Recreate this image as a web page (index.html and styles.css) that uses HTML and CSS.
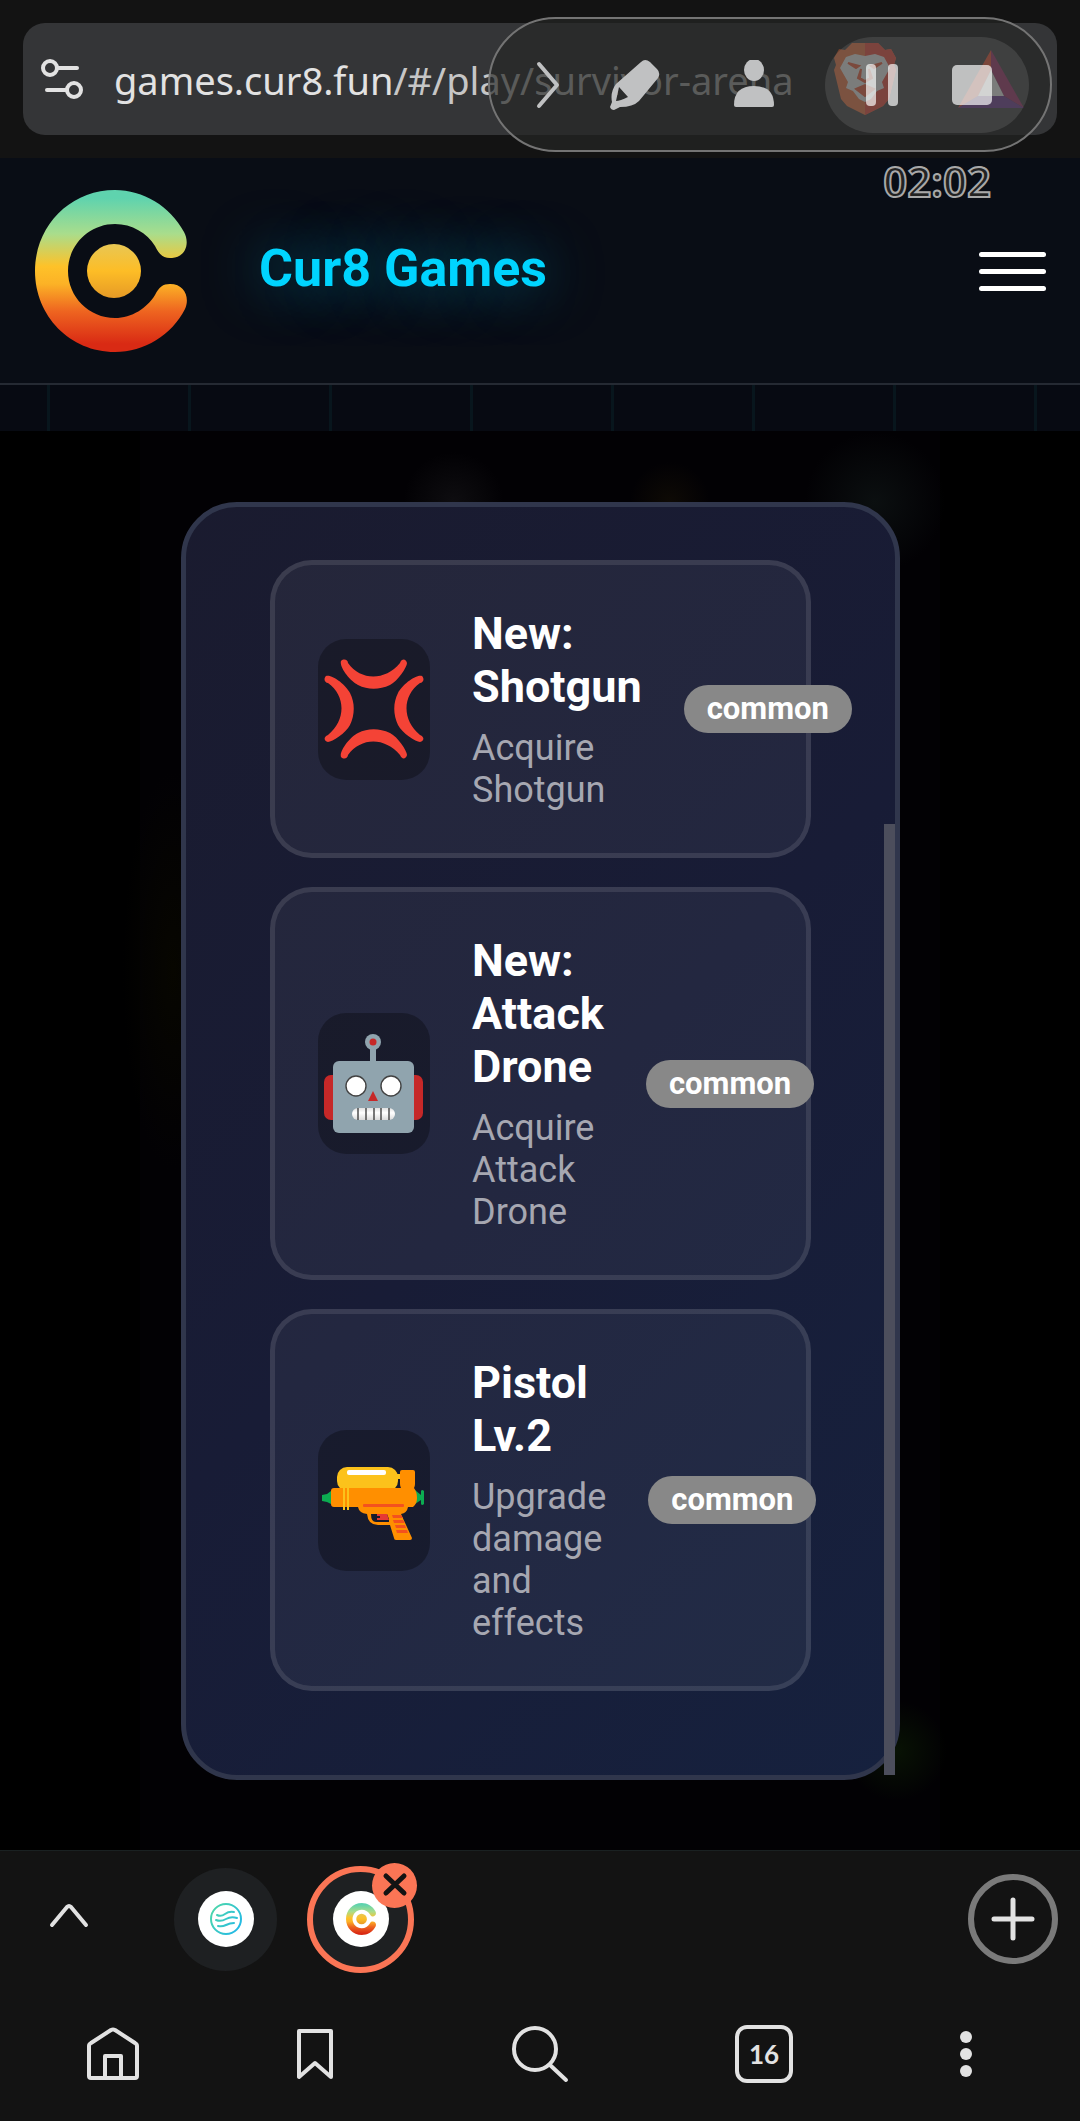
FILE: index.html
```
<!DOCTYPE html>
<html lang="en">
  <head>
    <meta charset="UTF-8" />
    <meta name="viewport" content="width=device-width, initial-scale=1.0" />
    <title>Cur8 Games</title>
    <link rel="stylesheet" href="styles.css">
  </head>
  <body>
    <!-- browser address bar -->
    <div class="browser-top">
      <div class="address-bar">
        <button class="icon-button" aria-label="Site settings">
          <svg width="44" height="44" viewBox="0 0 44 44" fill="none" stroke="#e2e2e2" stroke-width="4" stroke-linecap="round">
            <circle cx="10" cy="11" r="7" />
            <path d="M18 11h19" />
            <circle cx="34" cy="33" r="7" />
            <path d="M7 33h19" />
          </svg>
        </button>
        <div class="url">games.cur8.fun<span>/#/play/survivor-arena</span></div>
        <button class="icon-button brave" aria-label="Brave Shields">
          <svg width="62" height="72" viewBox="0 0 62 72">
            <path d="M18 0h26l7 7 6-1 5 9-2 7 2 5-7 29-6 7-18 9-18-9-6-7-7-29 2-5-2-7 5-9 6 1z" fill="#ff7139" />
            <path d="M31 0h13l7 7 6-1 5 9-2 7 2 5-7 29-6 7-18 9z" fill="#fb3d2b" />
            <path d="M12 14l9-3 10 2 10-2 9 3 6 11-8 14 2 6-7 3-6 8-6 3-6-3-6-8-7-3 2-6-8-14z" fill="#fff" />
            <path d="M14 20l11 3-3 2zM48 20l-11 3 3 2zM27 26l-3 9 7 4 7-4-3-9 1 9-5 3-5-3zM22 46l9-4 9 4-9 7z" fill="#fb542b" stroke="#fb542b" stroke-width="2" />
          </svg>
        </button>
        <button class="icon-button" aria-label="Brave Rewards">
          <svg width="66" height="58" viewBox="0 0 66 58">
            <path d="M33 0L33 20 20 46 0 58z" fill="#ff4724" />
            <path d="M33 0l33 58-20-12-13-26z" fill="#9e1f63" />
            <path d="M0 58l20-12h26l20 12z" fill="#662d91" />
            <path d="M33 20l13 26H20z" fill="#fff" />
          </svg>
        </button>
      </div>
      <!-- floating screen recorder -->
      <div class="recorder">
        <button class="icon-button collapse" aria-label="Collapse">
          <svg width="50" height="50" viewBox="0 0 50 50" fill="none" stroke="#c0c1c2" stroke-width="4" stroke-linecap="round" stroke-linejoin="round">
            <path d="M15 4l18 21-18 21" />
          </svg>
        </button>
        <button class="icon-button" aria-label="Draw">
          <svg width="52" height="52" viewBox="0 0 52 52" fill="#c0c1c2">
            <path fill-rule="evenodd" d="M33 3q4-4 9 0l7 7q4 4 1 9L31 42q-6 6-19 6l-6 3q-3 0-4-3l2-5q-2-10 4-18zM11 28L8 42q4 0 12-4z" />
          </svg>
        </button>
        <button class="icon-button camera" aria-label="Camera">
          <svg width="50" height="50" viewBox="0 0 50 50" fill="#c0c1c2">
            <ellipse cx="25" cy="10" rx="10" ry="11" />
            <path d="M5 45q0-19 20-19t20 19q0 2-2 2H7q-2 0-2-2z" />
          </svg>
        </button>
        <div class="recorder-controls">
          <button class="icon-button" aria-label="Pause">
            <svg width="50" height="50" viewBox="0 0 50 50" fill="#fff" fill-opacity="0.67">
              <rect x="9" y="4" width="10" height="42" rx="4" />
              <rect x="31" y="4" width="10" height="42" rx="4" />
            </svg>
          </button>
          <button class="icon-button" aria-label="Stop">
            <svg width="50" height="50" viewBox="0 0 50 50" fill="#fff" fill-opacity="0.67">
              <rect x="5" y="5" width="40" height="40" rx="5" />
            </svg>
          </button>
        </div>
      </div>
      <div class="recorder-time">02:02</div>
    </div>

    <!-- site header -->
    <header class="site-header">
      <a class="brand" href="#/">
        <svg class="logo" width="152" height="162" viewBox="0 0 152 162" aria-hidden="true">
          <defs>
            <linearGradient id="cur8" x1="0" y1="0" x2="0" y2="1">
              <stop offset="0.05" stop-color="#5fd3ae" />
              <stop offset="0.27" stop-color="#a9dd8c" />
              <stop offset="0.47" stop-color="#fec229" />
              <stop offset="0.58" stop-color="#fcb226" />
              <stop offset="0.75" stop-color="#ee6420" />
              <stop offset="0.95" stop-color="#d92a14" />
            </linearGradient>
            <linearGradient id="dot" x1="0" y1="0" x2="0" y2="1">
              <stop offset="0" stop-color="#e8c754" />
              <stop offset="0.5" stop-color="#fdbd26" />
              <stop offset="1" stop-color="#e69a26" />
            </linearGradient>
          </defs>
          <path fill="url(#cur8)" d="M80 0C108 0 135 16 149 42C155 53 151 67 137 68C127 69 123 62 120 56C112 43 97 34 80 34C54 34 33 55 33 81C33 107 54 128 80 128C97 128 112 118 120 105C124 97 128 94 135 94C150 94 155 108 150 119C137 145 109 162 80 162C35 162 0 126 0 81C0 36 35 0 80 0z" />
          <ellipse cx="79" cy="81" rx="27" ry="27" fill="url(#dot)" />
        </svg>
        <span class="brand-name">Cur8 Games</span>
      </a>
      <button class="menu-button" aria-label="Menu"><span></span><span></span><span></span></button>
    </header>

    <div class="grid-strip"></div>

    <main class="game">
      <div class="modal">
        <button class="card">
          <span class="card-icon">
            <svg width="100" height="100" viewBox="0 0 100 100" fill="#f44336">
              <path d="M17 2C20-1 24 1 24 4C37 22 61 22 76 4C78 -1 82 0 83 4C83 8 74 22 66 26C55 31 44 31 34 26C26 22 15 8 17 2z" />
              <path d="M17 98C20 101 24 99 24 96C37 78 61 78 76 96C78 101 82 100 83 96C83 92 74 78 66 74C55 69 44 69 34 74C26 78 15 92 17 98z" />
              <path d="M2 17C-1 20 1 24 4 24C22 37 22 61 4 76C-1 78 0 82 4 83C8 83 22 74 26 66C31 55 31 44 26 34C22 26 8 15 2 17z" />
              <path d="M98 17C101 20 99 24 96 24C78 37 78 61 96 76C101 78 100 82 96 83C92 83 78 74 74 66C69 55 69 44 74 34C78 26 92 15 98 17z" />
            </svg>
          </span>
          <span class="card-info">
            <span class="card-title">New: Shotgun</span>
            <span class="card-text">Acquire Shotgun</span>
          </span>
          <span class="rarity">common</span>
        </button>

        <button class="card">
          <span class="card-icon">
            <svg width="100" height="100" viewBox="0 0 100 100">
              <defs>
                <linearGradient id="teeth" x1="0" y1="0" x2="0" y2="1">
                  <stop offset="0" stop-color="#e0e0e0" />
                  <stop offset="0.4" stop-color="#ffffff" />
                  <stop offset="1" stop-color="#dadada" />
                </linearGradient>
              </defs>
              <rect x="0" y="41" width="20" height="45" rx="7" fill="#c62828" />
              <rect x="79" y="41" width="20" height="45" rx="7" fill="#c62828" />
              <path d="M49 9v22" stroke="#90a4ae" stroke-width="6" />
              <circle cx="49" cy="8" r="8" fill="#90a4ae" />
              <circle cx="49" cy="8" r="3.5" fill="#c62828" />
              <rect x="9" y="27" width="81" height="72" rx="6" fill="#90a4ae" />
              <circle cx="32" cy="52" r="10" fill="#fff" stroke="#424242" stroke-width="1.4" />
              <circle cx="67" cy="52" r="10" fill="#fff" stroke="#424242" stroke-width="1.4" />
              <path d="M49 57l5 10H44z" fill="#c62828" />
              <rect x="28" y="74" width="43" height="12" rx="6" fill="url(#teeth)" />
              <path d="M34 74v12M42 74v12M50 74v12M57 74v12M65 74v12" stroke="#424242" stroke-width="1.4" />
            </svg>
          </span>
          <span class="card-info">
            <span class="card-title">New: Attack Drone</span>
            <span class="card-text">Acquire Attack Drone</span>
          </span>
          <span class="rarity">common</span>
        </button>

        <button class="card">
          <span class="card-icon">
            <svg width="104" height="100" viewBox="0 0 104 100">
              <path d="M0 45l5-1 4-3v13l-4-2-5-1z" fill="#0cab51" />
              <path d="M93 40l6 5v-4q1-2 3 0v13q-2 2-3 0v-4l-6 4z" fill="#0cab51" />
              <rect x="15" y="17" width="61" height="24" rx="10" fill="#fcc21b" />
              <rect x="25" y="20" width="39" height="5" rx="2" fill="#fff" />
              <path d="M75 24h5v5h-5z" fill="#fcc21b" />
              <path d="M12 38h67q-1-2-1-4V22q0-2 2-2h11q2 0 2 2v12q0 2-1 4 3 4 3 10t-4 9h-5q-1 6-7 7l11 24q0 2-2 2H74q-2 0-2-2l-4-13H56q-10 0-11-11-8-1-9-7H12q-3 0-3-3V41q0-3 3-3zM49 64q0 8 5 8h13v-3l-2-5z" fill="#ff8f00" fill-rule="evenodd" />
              <rect x="41" y="54" width="41" height="3" rx="1" fill="#f4511e" />
              <path d="M55 64h10l2 6H55v-2h3v-2h-3z" fill="#e53935" />
              <path d="M70 65h9l2 3H71zM71 70h10l2 3H72zM73 75h10l1 3H74zM74 80h11l1 3H75z" fill="#f4511e" />
              <path d="M22 38v22M26 38v22" stroke="#fcc21b" stroke-width="2" />
            </svg>
          </span>
          <span class="card-info">
            <span class="card-title">Pistol Lv.2</span>
            <span class="card-text">Upgrade damage and effects</span>
          </span>
          <span class="rarity">common</span>
        </button>
        <div class="scroll-thumb"></div>
      </div>
    </main>

    <!-- browser tab strip and bottom toolbar -->
    <footer class="browser-bottom">
      <div class="tab-strip">
        <button class="icon-button" aria-label="Expand">
          <svg width="44" height="44" viewBox="0 0 44 44" fill="none" stroke="#e2e2e2" stroke-width="4" stroke-linecap="round" stroke-linejoin="round">
            <path d="M5 28L20 10q2-2 4 0l15 18" />
          </svg>
        </button>
        <button class="tab" aria-label="Tab 1">
          <span class="favicon">
            <svg width="32" height="32" viewBox="0 0 32 32" fill="none" stroke="url(#wave)" stroke-width="2" stroke-linecap="round">
              <defs>
                <linearGradient id="wave" gradientUnits="userSpaceOnUse" x1="0" y1="4" x2="32" y2="26">
                  <stop offset="0" stop-color="#50d9a5" />
                  <stop offset="1" stop-color="#20b7ea" />
                </linearGradient>
              </defs>
              <circle cx="16" cy="16" r="15" />
              <path d="M7 12q4 2 8-1t9-2M6 17q5 2 10-1t11-1M8 23q4 1 8-1t8-2" />
            </svg>
          </span>
        </button>
        <div class="tab-wrap">
          <button class="tab active" aria-label="Tab 2">
            <span class="favicon">
              <svg width="30" height="32" viewBox="0 0 152 162">
                <path fill="url(#cur8)" d="M80 0C108 0 135 16 149 42C155 53 151 67 137 68C127 69 123 62 120 56C112 43 97 34 80 34C54 34 33 55 33 81C33 107 54 128 80 128C97 128 112 118 120 105C124 97 128 94 135 94C150 94 155 108 150 119C137 145 109 162 80 162C35 162 0 126 0 81C0 36 35 0 80 0z" />
                <circle cx="79" cy="81" r="27" fill="url(#dot)" />
              </svg>
            </span>
          </button>
          <button class="tab-close" aria-label="Close tab">
            <svg width="45" height="45" viewBox="0 0 45 45" stroke="#131313" stroke-width="5" stroke-linecap="round">
              <path d="M14 13l18 17M32 13L14 30" />
            </svg>
          </button>
        </div>
        <button class="new-tab" aria-label="New tab">
          <svg width="46" height="46" viewBox="0 0 46 46" stroke="#e2e2e2" stroke-width="5" stroke-linecap="round">
            <path d="M23 4v38M4 23h38" />
          </svg>
        </button>
      </div>
      <nav class="toolbar">
        <button class="icon-button" aria-label="Home">
          <svg width="56" height="56" viewBox="0 0 56 56" fill="none" stroke="#e2e2e2" stroke-width="4" stroke-linejoin="round">
            <path d="M4 20q0-2 2-3L26 4q2-1 4 0l20 13q2 1 2 3v30q0 2-2 2H6q-2 0-2-2z" />
            <path d="M20 52V30h16v22" />
          </svg>
        </button>
        <button class="icon-button" aria-label="Bookmarks">
          <svg width="56" height="56" viewBox="0 0 56 56" fill="none" stroke="#e2e2e2" stroke-width="4" stroke-linejoin="round">
            <path d="M12 5h32v46L28 37 12 51z" />
          </svg>
        </button>
        <button class="icon-button" aria-label="Search">
          <svg width="60" height="60" viewBox="0 0 60 60" fill="none" stroke="#e2e2e2" stroke-width="4" stroke-linecap="round">
            <circle cx="25" cy="25" r="21" />
            <path d="M40 41l16 15" />
          </svg>
        </button>
        <button class="icon-button" aria-label="Tabs"><span class="tab-count">16</span></button>
        <button class="icon-button" aria-label="More">
          <svg width="12" height="48" viewBox="0 0 12 48" fill="#e2e2e2">
            <circle cx="6" cy="7" r="6" />
            <circle cx="6" cy="24" r="6" />
            <circle cx="6" cy="41" r="6" />
          </svg>
        </button>
      </nav>
    </footer>
  </body>
</html>
```
FILE: styles.css
```
* {
  margin: 0;
  padding: 0;
  box-sizing: border-box;
}
body {
  min-height: 100vh;
  display: flex;
  flex-direction: column;
  background-color: #000;
  font-family: Roboto, sans-serif;
}
button {
  border: none;
  background: none;
  color: inherit;
  font-family: inherit;
  cursor: pointer;
}
svg {
  display: block;
}
.icon-button {
  display: flex;
  justify-content: center;
  align-items: center;
  flex-shrink: 0;
}

/* address bar */
.browser-top {
  position: relative;
  padding: 23px;
  background-color: #131313;
}
.address-bar {
  height: 112px;
  display: flex;
  align-items: center;
  padding: 0 33px 0 17px;
  border-radius: 22px;
  background-color: #343537;
}
.url {
  flex: 1;
  min-width: 0;
  margin: 0 24px 0 30px;
  padding-top: 2px;
  overflow: hidden;
  white-space: nowrap;
  color: #e2e2e2;
  font-family: "Noto Sans", sans-serif;
  font-size: 38px;
  line-height: 56px;
}
.url span {
  color: #c6c6c6;
}
.brave {
  margin-right: 62px;
}

/* screen recorder overlay */
.recorder {
  position: absolute;
  top: 17px;
  right: 28px;
  width: 564px;
  height: 135px;
  display: flex;
  align-items: center;
  padding: 0 21px 0 34px;
  border: 2px solid #747474;
  border-radius: 68px;
  background-color: rgba(37, 39, 37, 0.67);
}
.collapse {
  margin-right: 34px;
}
.camera {
  margin: 0 46px 0 auto;
}
.recorder-controls {
  width: 204px;
  height: 96px;
  display: flex;
  align-items: center;
  justify-content: space-between;
  padding: 0 32px;
  border-radius: 48px;
  background-color: rgba(255, 255, 255, 0.1);
}
.recorder-time {
  position: absolute;
  top: 151px;
  right: 89px;
  color: #222;
  font-family: "Noto Sans", sans-serif;
  font-size: 42px;
  font-weight: 600;
  line-height: 60px;
  -webkit-text-stroke: 2px #a8a8a8;
}

/* site header */
.site-header {
  display: flex;
  justify-content: space-between;
  align-items: center;
  padding: 32px 34px 31px 35px;
  border-bottom: 2px solid #252a33;
  background-color: #090d15;
}
.brand {
  display: flex;
  align-items: center;
  gap: 72px;
  text-decoration: none;
}
.brand-name {
  padding-bottom: 4px;
  color: #00d4ff;
  font-size: 52px;
  font-weight: 700;
  line-height: 60px;
  text-shadow: 0 0 56px rgba(0, 212, 255, 0.5);
}
.menu-button {
  width: 67px;
  display: flex;
  flex-direction: column;
  gap: 12px;
}
.menu-button span {
  height: 5px;
  border-radius: 3px;
  background-color: #fff;
}
.grid-strip {
  height: 46px;
  background-color: #070a12;
  background-image: linear-gradient(90deg, #08161d 3px, transparent 3px);
  background-size: 141px 100%;
  background-position: 47px 0;
}

/* game and level up modal */
.game {
  flex: 1;
  padding: 71px 180px 70px 181px;
  background:
    radial-gradient(circle at 83% 93%, #081204, transparent 50px),
    radial-gradient(circle at 81% 5%, #0b0f10, transparent 70px),
    radial-gradient(circle at 62% 5%, #0e0a05, transparent 40px),
    radial-gradient(circle at 42% 5%, #0e0d10, transparent 50px),
    radial-gradient(ellipse 50px 200px at 16% 38%, #070600, transparent),
    linear-gradient(90deg, transparent 13%, #020104 13%, #020104 87%, transparent 87%),
    #000;
}
.modal {
  position: relative;
  display: flex;
  flex-direction: column;
  gap: 29px;
  padding: 53px 84px 84px;
  border: 5px solid #30364c;
  border-radius: 56px;
  background: linear-gradient(135deg, #1a1b2f, #181c36 50%, #16213e);
}
.card {
  display: flex;
  align-items: center;
  gap: 42px;
  padding: 42px 43px;
  border: 5px solid rgba(255, 255, 255, 0.1);
  border-radius: 42px;
  background-color: rgba(255, 255, 255, 0.05);
  text-align: left;
}
.card-icon {
  width: 112px;
  height: 141px;
  flex-shrink: 0;
  display: flex;
  justify-content: center;
  align-items: center;
  border-radius: 28px;
  background-color: rgba(0, 0, 0, 0.3);
}
.card-info {
  flex: 1;
  display: flex;
  flex-direction: column;
  gap: 14px;
}
.card-title {
  color: #fff;
  font-size: 45px;
  font-weight: 700;
  line-height: 53px;
}
.card-text {
  color: #a6a7b1;
  font-size: 36px;
  line-height: 42px;
}
.rarity {
  padding: 0 23px;
  border-radius: 24px;
  background-color: #888;
  color: #fff;
  font-size: 31px;
  font-weight: 700;
  line-height: 48px;
}
.scroll-thumb {
  position: absolute;
  right: 0;
  bottom: 0;
  width: 11px;
  height: 75%;
  background-color: #4c4e5c;
}

/* bottom bars */
.browser-bottom {
  border-top: 1px solid #1a2122;
  background-color: #131313;
}
.tab-strip {
  height: 136px;
  display: flex;
  align-items: center;
  padding: 0 22px 0 47px;
}
.tab {
  width: 103px;
  height: 103px;
  display: flex;
  justify-content: center;
  align-items: center;
  margin-left: 83px;
  border-radius: 50%;
  background-color: #1e2022;
}
.favicon {
  width: 56px;
  height: 56px;
  display: flex;
  justify-content: center;
  align-items: center;
  border-radius: 50%;
  background-color: #fff;
}
.tab-wrap {
  position: relative;
  margin-left: 30px;
}
.tab.active {
  width: 107px;
  height: 107px;
  margin-left: 0;
  border: 6px solid #fb7555;
}
.tab-close {
  position: absolute;
  top: -3px;
  right: -3px;
  border-radius: 50%;
  background-color: #fb7555;
}
.new-tab {
  width: 90px;
  height: 90px;
  display: flex;
  justify-content: center;
  align-items: center;
  margin-left: auto;
  border: 6px solid #7a7a7a;
  border-radius: 50%;
}
.toolbar {
  height: 134px;
  display: grid;
  grid-template-columns: 226fr 178fr 272fr 176fr 228fr;
}
.tab-count {
  width: 58px;
  height: 58px;
  border: 4px solid #e2e2e2;
  border-radius: 12px;
  color: #e2e2e2;
  font-family: Lato, sans-serif;
  font-size: 26px;
  font-weight: 700;
  line-height: 50px;
}
```
